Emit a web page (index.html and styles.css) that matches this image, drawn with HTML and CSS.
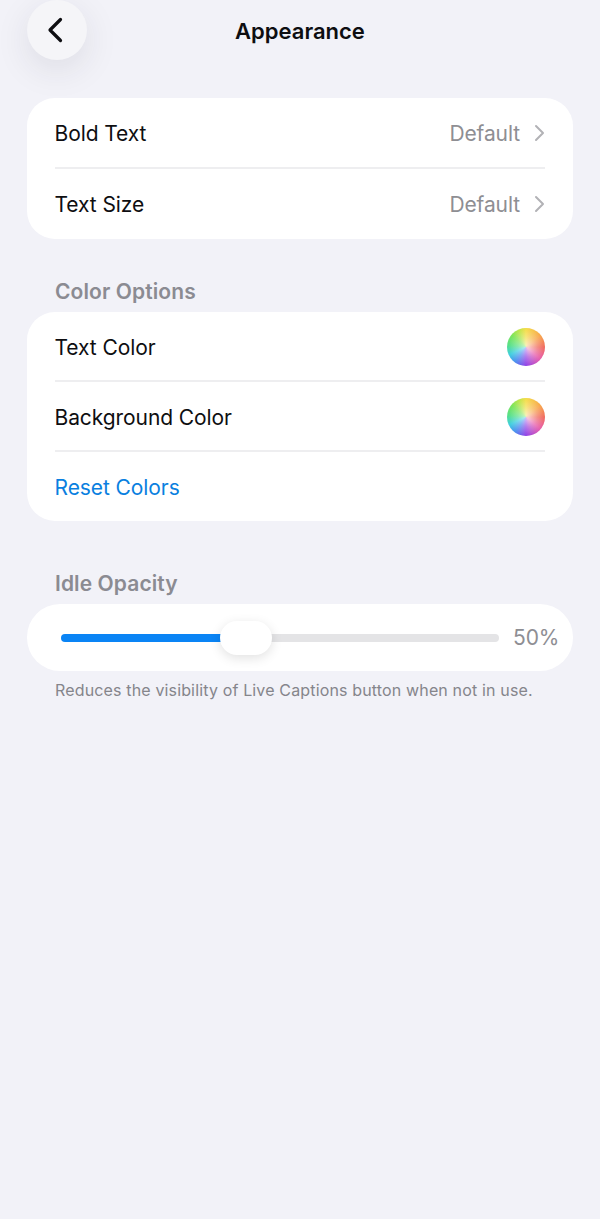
FILE: index.html
```html
<!DOCTYPE html>
<html lang="en">
<head>
<meta charset="utf-8">
<title>Appearance</title>
<link rel="stylesheet" href="styles.css">
</head>
<body>
<div class="page">
  <header class="topbar">
    <button class="back" aria-label="Back">
      <svg width="20" height="28" viewBox="0 0 20 28"><path d="M15.5 3.5 L5 14 L15.5 24.5" fill="none" stroke="#0e0e11" stroke-width="3.2" stroke-linecap="round" stroke-linejoin="round"/></svg>
    </button>
    <h1 class="title">Appearance</h1>
  </header>

  <section class="card first">
    <div class="row">
      <span class="label">Bold Text</span>
      <span class="value">Default</span>
      <svg class="chev" width="11" height="18" viewBox="0 0 11 18"><path d="M2 2 L9 9 L2 16" fill="none" stroke="#b2b2b6" stroke-width="2" stroke-linecap="round" stroke-linejoin="round"/></svg>
    </div>
    <div class="divider"></div>
    <div class="row">
      <span class="label">Text Size</span>
      <span class="value">Default</span>
      <svg class="chev" width="11" height="18" viewBox="0 0 11 18"><path d="M2 2 L9 9 L2 16" fill="none" stroke="#b2b2b6" stroke-width="2" stroke-linecap="round" stroke-linejoin="round"/></svg>
    </div>
  </section>

  <h2 class="section-title colors">Color Options</h2>
  <section class="card second">
    <div class="row">
      <span class="label">Text Color</span>
      <span class="wheel"></span>
    </div>
    <div class="divider"></div>
    <div class="row">
      <span class="label">Background Color</span>
      <span class="wheel"></span>
    </div>
    <div class="divider"></div>
    <div class="row">
      <span class="label link">Reset Colors</span>
    </div>
  </section>

  <h2 class="section-title idle">Idle Opacity</h2>
  <section class="card slider-card">
    <div class="slider">
      <div class="fill"></div>
      <div class="thumb"></div>
      <div class="rest"></div>
    </div>
    <span class="percent">50%</span>
  </section>
  <p class="note">Reduces the visibility of Live Captions button when not in use.</p>
</div>
</body>
</html>
```
FILE: styles.css
```css
* { box-sizing: border-box; margin: 0; padding: 0; }
html, body { height: 100%; }
body {
  background: #f2f2f8;
  font-family: Inter, "Liberation Sans", sans-serif;
  color: #0e0e11;
  overflow: hidden;
}
.page { padding: 0 27px; }
.topbar {
  display: flex;
  align-items: center;
  height: 60px;
  position: relative;
  justify-content: center;
}
.back {
  position: absolute;
  left: 0;
  top: 0;
  width: 60px;
  height: 60px;
  border-radius: 50%;
  border: none;
  background: #f5f5f8;
  box-shadow: 0 10px 34px rgba(40, 40, 60, 0.10);
  display: flex;
  align-items: center;
  justify-content: center;
}
.back svg { margin-left: -4px; margin-top: -1px; }
.title { font-size: 22px; font-weight: 600; margin-top: 2px; }
.card { background: #fff; border-radius: 28px; padding: 0 28px 0 27.5px; }
.first { margin-top: 38px; padding-bottom: 1px; }
.first .row { height: 69px; padding-top: 1px; }
.second { padding-bottom: 1px; }
.row {
  display: flex;
  align-items: center;
  height: 68px;
  padding-top: 2px;
}
.label { font-size: 21px; letter-spacing: -0.08px; flex: 1; }
.link { color: #0a7fe0; }
.value { font-size: 21px; color: #8e8e93; letter-spacing: -0.1px; }
.chev { margin-left: 14px; }
.divider { height: 2px; background: #eeeef0; }
.section-title {
  font-size: 21px;
  font-weight: 600;
  color: #8b8b92;
  letter-spacing: 0.1px;
  padding-left: 28px;
  line-height: 26px;
}
.colors { margin-top: 40px; margin-bottom: 7px; }
.idle { margin-top: 50px; margin-bottom: 7px; }
.wheel {
  width: 38px;
  height: 38px;
  border-radius: 50%;
  background:
    radial-gradient(circle at 55% 50%, rgba(255,255,255,0.7) 0, rgba(255,255,255,0.3) 35%, rgba(255,255,255,0) 68%),
    conic-gradient(from 0deg, #f5dc45 0deg, #f7a23e 50deg, #ef5d4f 90deg, #e652a6 130deg, #8f3fe6 180deg, #4f8df0 215deg, #41cfe0 245deg, #56e08a 275deg, #7ee55a 310deg, #c5e448 340deg, #f5dc45 360deg);
}
.slider-card {
  display: flex;
  align-items: center;
  height: 67px;
  padding: 0 14px 0 34px;
  border-radius: 33px;
}
.slider { flex: 1; display: flex; align-items: center; position: relative; height: 34px; }
.fill { width: 170px; height: 8px; background: #0a84f5; border-radius: 4px 0 0 4px; }
.rest { flex: 1; height: 8px; background: #e4e4e6; border-radius: 0 4px 4px 0; margin-left: 40px; }
.thumb {
  position: absolute;
  left: 159px;
  top: 0;
  width: 52px;
  height: 34px;
  border-radius: 17px;
  background: #fff;
  box-shadow: 0 3px 12px rgba(0, 0, 0, 0.12);
}
.percent { font-size: 21px; color: #8e8e93; margin-left: 14px; width: 46px; letter-spacing: -0.1px; }
.note {
  font-size: 16px;
  color: #85858b;
  padding-left: 28px;
  margin-top: 10px;
  line-height: 19px;
  letter-spacing: 0.15px;
  white-space: nowrap;
}
```
